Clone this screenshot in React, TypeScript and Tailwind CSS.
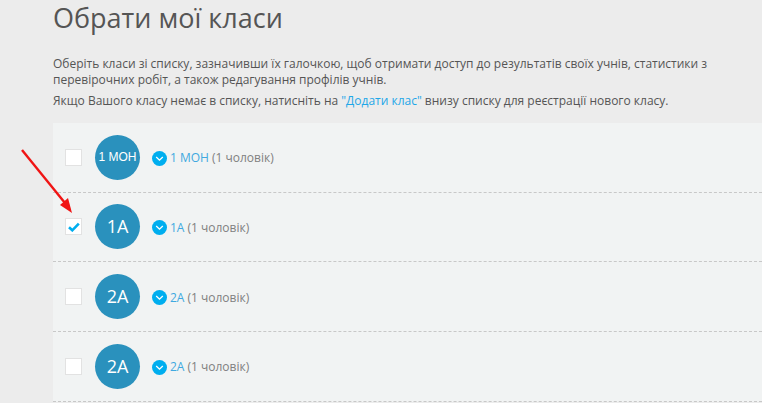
const rows = [
  { id: 1, short: '1 МОН', name: '1 МОН', checked: false, small: true },
  { id: 2, short: '1А', name: '1А', checked: true, small: false },
  { id: 3, short: '2А', name: '2А', checked: false, small: false },
  { id: 4, short: '2А', name: '2А', checked: false, small: false },
]

function Chevron() {
  return (
    <span className="flex h-[15px] w-[15px] shrink-0 items-center justify-center rounded-full bg-[#00aeef]">
      <svg width="11" height="11" viewBox="0 0 11 11" fill="none">
        <path d="M2.2 4L5.5 7.2L8.8 4" stroke="white" strokeWidth="1.3" />
      </svg>
    </span>
  )
}

function ClassRow({ row }: { row: (typeof rows)[number] }) {
  return (
    <div className="flex h-[69.67px] shrink-0 items-center border-b border-dashed border-[#c8c8c8] pl-[12px]">
      <span className="flex h-[17px] w-[17px] items-center justify-center border border-[#e2e2e2] bg-white">
        {row.checked && (
          <svg width="12" height="10" viewBox="0 0 12 10">
            <path d="M1 5.2L4.3 8.3L10.8 1.6" fill="none" stroke="#00aeef" strokeWidth="2.6" />
          </svg>
        )}
      </span>
      <span
        className={`ml-[13px] flex h-[45px] w-[45px] items-center justify-center rounded-full bg-[#2a91bd] text-white ${row.small ? "font-['Liberation_Sans',sans-serif] text-[12px]" : 'text-[18px]'}`}
      >
        {row.short}
      </span>
      <span className="ml-[12px] mt-[2px] flex items-center text-[12px] text-[#808080]">
        <Chevron />
        <span className="ml-[3px] text-[#3fa9e0]">{row.name}</span>
        <span className="ml-[3px]">(1 чоловік)</span>
      </span>
    </div>
  )
}

export default function App() {
  return (
    <div className="relative h-[403px] w-[762px] overflow-hidden bg-[#ececec] font-['Open_Sans',sans-serif]">
      <div className="pl-[53px]">
        <h1 className="text-[27px] leading-[36px] text-[#555555]">Обрати мої класи</h1>
        <div className="mt-[20px] pr-[40px] text-[12px] leading-[16px] text-[#555555]">
          <p>
            Оберіть класи зі списку, зазначивши їх галочкою, щоб отримати доступ до результатів своїх учнів, статистики з
            перевірочних робіт, а також редагування профілів учнів.
          </p>
          <p className="mt-[5px]">
            Якщо Вашого класу немає в списку, натисніть на <span className="text-[#1ea7e8]">"Додати клас"</span> внизу
            списку для реєстрації нового класу.
          </p>
        </div>
        <div className="mt-[14px] flex flex-col bg-[#f1f3f3]">
          {rows.map((row) => (
            <ClassRow key={row.id} row={row} />
          ))}
        </div>
      </div>
      <svg className="absolute left-[20px] top-[148px]" width="60" height="70" viewBox="0 0 60 70" fill="none">
        <path d="M2 2L45 55" stroke="#f01414" strokeWidth="2.4" />
        <path d="M52 65L40 57L48 50Z" fill="#f01414" />
      </svg>
    </div>
  )
}
